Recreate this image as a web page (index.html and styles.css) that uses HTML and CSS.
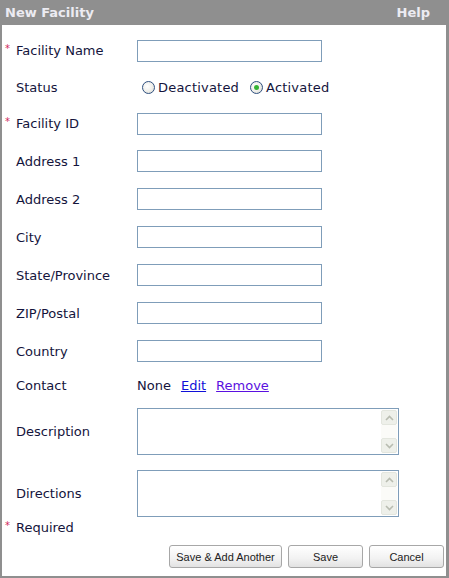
FILE: index.html
```html
<!DOCTYPE html>
<html>
<head>
<meta charset="utf-8">
<link rel="stylesheet" href="styles.css">
</head>
<body>
<div class="frame">
  <div class="titlebar">
    <span class="title">New Facility</span>
    <span class="help">Help</span>
  </div>
  <div class="panel">
    <div class="row r37"><span class="req">*</span><span class="label">Facility Name</span><span class="input"></span></div>
    <div class="row r36"><span class="req"></span><span class="label">Status</span>
      <span class="radios">
        <span class="radio"><span class="dot"></span>Deactivated</span>
        <span class="radio"><span class="dot on"></span>Activated</span>
      </span>
    </div>
    <div class="row r37"><span class="req">*</span><span class="label">Facility ID</span><span class="input"></span></div>
    <div class="row r38"><span class="req"></span><span class="label">Address 1</span><span class="input"></span></div>
    <div class="row r38"><span class="req"></span><span class="label">Address 2</span><span class="input"></span></div>
    <div class="row r38"><span class="req"></span><span class="label">City</span><span class="input"></span></div>
    <div class="row r38"><span class="req"></span><span class="label">State/Province</span><span class="input"></span></div>
    <div class="row r38"><span class="req"></span><span class="label">ZIP/Postal</span><span class="input"></span></div>
    <div class="row r38"><span class="req"></span><span class="label">Country</span><span class="input"></span></div>
    <div class="row r30"><span class="req"></span><span class="label">Contact</span>
      <span class="contact">None<a class="link" href="#">Edit</a><a class="link visited" href="#">Remove</a></span>
    </div>
    <div class="row tarow"><span class="req"></span><span class="label">Description</span>
      <span class="textarea"><span class="tabody"></span><span class="scroll"><span class="sbtn up"><svg width="9" height="6" viewBox="0 0 9 6"><path d="M1 5 L4.5 1.5 L8 5" fill="none" stroke="#b8bcb0" stroke-width="1.6"/></svg></span><span class="strack"></span><span class="sbtn down"><svg width="9" height="6" viewBox="0 0 9 6"><path d="M1 1 L4.5 4.5 L8 1" fill="none" stroke="#b8bcb0" stroke-width="1.6"/></svg></span></span></span>
    </div>
    <div class="row tarow"><span class="req"></span><span class="label">Directions</span>
      <span class="textarea"><span class="tabody"></span><span class="scroll"><span class="sbtn up"><svg width="9" height="6" viewBox="0 0 9 6"><path d="M1 5 L4.5 1.5 L8 5" fill="none" stroke="#b8bcb0" stroke-width="1.6"/></svg></span><span class="strack"></span><span class="sbtn down"><svg width="9" height="6" viewBox="0 0 9 6"><path d="M1 1 L4.5 4.5 L8 1" fill="none" stroke="#b8bcb0" stroke-width="1.6"/></svg></span></span></span>
    </div>
    <div class="row r20"><span class="req">*</span><span class="label">Required</span></div>
    <div class="buttons">
      <button class="btn wide">Save &amp; Add Another</button>
      <button class="btn">Save</button>
      <button class="btn">Cancel</button>
    </div>
  </div>
</div>
</body>
</html>
```

FILE: styles.css
```css
html, body {
  margin: 0;
  padding: 0;
}
body {
  width: 449px;
  height: 578px;
  background: #8f8f8f;
  font-family: "DejaVu Sans", Verdana, sans-serif;
  font-size: 13px;
  color: #14143c;
  overflow: hidden;
}
.frame {
  display: flex;
  flex-direction: column;
  height: 578px;
  padding: 0 3px 2px 2px;
  box-sizing: border-box;
}
.titlebar {
  height: 25px;
  display: flex;
  align-items: center;
  justify-content: space-between;
  padding: 0 16px 0 3px;
  color: #ecebf2;
  font-weight: bold;
  font-size: 13px;
}
.panel {
  flex: 1;
  background: #ffffff;
  padding: 7px 2px 0 3px;
  display: flex;
  flex-direction: column;
}
.row {
  display: flex;
  align-items: center;
}
.r36 { height: 36px; }
.r37 { height: 37px; }
.r38 { height: 38px; }
.r30 { height: 30px; }
.r20 { height: 20px; }
.req {
  width: 11px;
  flex: none;
  color: #d0285a;
  font-size: 10px;
  align-self: center;
  margin-top: -4px;
}
.label {
  width: 121px;
  flex: none;
}
.input {
  width: 185px;
  height: 22px;
  box-sizing: border-box;
  border: 1px solid #7f9db9;
  background: #fff;
}
.radios {
  display: flex;
  gap: 11px;
  margin-left: 5px;
  letter-spacing: 0.2px;
}
.radio {
  display: flex;
  align-items: center;
  gap: 3px;
}
.dot {
  width: 11px;
  height: 11px;
  border-radius: 50%;
  border: 1px solid #2f5080;
  background: radial-gradient(circle at 40% 40%, #ffffff 0%, #f0f0ec 50%, #d4d4cc 100%);
  display: flex;
  align-items: center;
  justify-content: center;
}
.dot.on::after {
  content: "";
  width: 5px;
  height: 5px;
  border-radius: 50%;
  background: #35b335;
}
.contact {
  display: flex;
  gap: 10px;
}
.link {
  color: #1010d8;
  text-decoration: underline;
}
.link.visited {
  color: #5a10e0;
}
.tarow {
  padding-top: 8px;
}
.tarow + .tarow {
  padding-top: 15px;
}
.textarea {
  width: 262px;
  height: 47px;
  box-sizing: border-box;
  border: 1px solid #7f9db9;
  display: flex;
  background: #fff;
}
.tabody {
  flex: 1;
}
.scroll {
  width: 16px;
  display: flex;
  flex-direction: column;
  padding: 1px 1px 1px 0;
}
.sbtn {
  height: 15px;
  background: #eef0ea;
  border: 1px solid #e3e6de;
  border-radius: 2px;
  display: flex;
  align-items: center;
  justify-content: center;
  box-sizing: border-box;
}
.strack {
  flex: 1;
  background: #fbfbf8;
}
.buttons {
  display: flex;
  justify-content: flex-end;
  gap: 6px;
  margin-top: 8px;
}
.btn {
  height: 23px;
  width: 75px;
  padding: 0;
  border: 1px solid #a7a7a7;
  border-radius: 3px;
  background: linear-gradient(#ffffff, #f2f2f2 60%, #e2e2e2);
  font-family: "Liberation Sans", Arial, sans-serif;
  font-size: 11px;
  color: #222;
}
.btn.wide {
  width: 113px;
}
```
